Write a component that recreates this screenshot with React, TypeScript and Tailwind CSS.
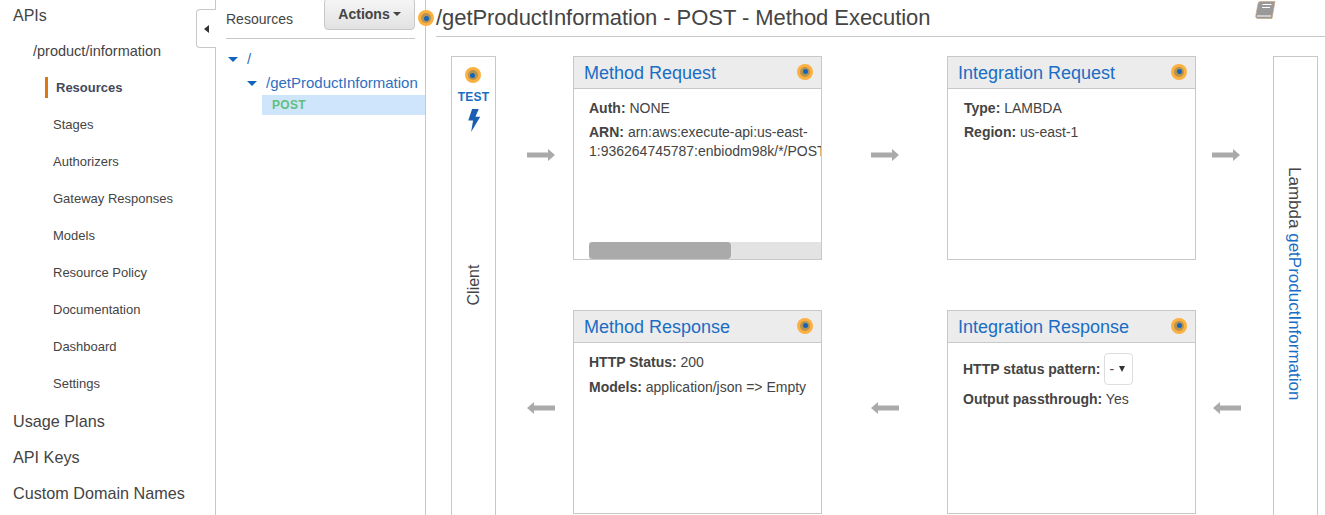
const navItems = ["Stages", "Authorizers", "Gateway Responses", "Models", "Resource Policy", "Documentation", "Dashboard", "Settings"];

function Dot() {
  return (
    <span className="flex h-4 w-4 shrink-0 items-center justify-center rounded-full bg-[#fbb040]">
      <span className="flex h-[10px] w-[10px] items-center justify-center rounded-full bg-[#b8934f]">
        <span className="h-[5px] w-[5px] rounded-full bg-[#1166bb]"></span>
      </span>
    </span>
  );
}

function Arrow({ left }: { left?: boolean }) {
  return (
    <svg width="28" height="14" viewBox="0 0 28 14" className={left ? "rotate-180" : ""}>
      <path d="M0 4.5H21V1L28 7L21 13V9.5H0Z" fill="#aaaaaa" />
    </svg>
  );
}

function ArrowCell({ left, className }: { left?: boolean; className?: string }) {
  return (
    <div className={`flex items-center justify-center ${className ?? ""}`}>
      <Arrow left={left} />
    </div>
  );
}

function Caret() {
  return <span className="h-0 w-0 border-x-[5px] border-t-[5px] border-x-transparent border-t-[#1166bb]"></span>;
}

function Card({ title, children }: { title: string; children?: React.ReactNode }) {
  return (
    <div className="flex h-[204px] w-[249px] flex-col overflow-hidden border border-[#c8c8c8] bg-white">
      <div className="flex h-[32px] shrink-0 items-center justify-between border-b border-[#c8c8c8] bg-[#ececec] pl-[10px] pr-[8px]">
        <span className="text-[18px] leading-none text-[#1a6dc4]">{title}</span>
        <span className="-mt-[2px]"><Dot /></span>
      </div>
      {children}
    </div>
  );
}

function Line({ label, value }: { label: string; value: string }) {
  return (
    <div className="h-[24px] whitespace-nowrap text-[14px] leading-[24px] text-[#444444]">
      <b>{label}</b> {value}
    </div>
  );
}

function BookIcon() {
  return (
    <svg width="21" height="19" viewBox="0 0 21 19" className="absolute right-[49px] top-[1px]">
      <path d="M5.5 0.5H20L17 17.5H3C1.2 17.5 0.4 16.3 0.8 14.5L3 2.8C3.3 1.4 4.2 0.5 5.5 0.5Z" fill="#999999" stroke="#c9a680" strokeWidth="0.7" />
      <path d="M7.5 3.5H16.5M7 6.5H15" stroke="#ffffff" strokeWidth="1.2" />
      <path d="M2 15H16" stroke="#ffffff" strokeWidth="1" />
    </svg>
  );
}

export default function App() {
  return (
    <div className="flex h-[515px] w-[1325px] overflow-hidden bg-white font-['Liberation_Sans',Arial,sans-serif] text-[#444444]">
      {/* SIDEBAR */}
      <aside className="relative w-[216px] shrink-0 border-r border-[#c8c8c8] pl-[13px]">
        <div className="mt-[5px] h-[21px] text-[16px] leading-[21px]">APIs</div>
        <div className="ml-[20px] mt-[15px] h-[21px] text-[14.5px] leading-[21px]">/product/information</div>
        <div className="ml-[32px] mt-[15px] flex h-[21px] items-center border-l-[3px] border-[#dd7711] pl-[8px] text-[13px] font-bold text-[#44495a]">
          Resources
        </div>
        <div className="ml-[40px] flex flex-col">
          {navItems.map((item) => (
            <div key={item} className="mt-[16px] h-[21px] text-[13px] leading-[21px]">{item}</div>
          ))}
        </div>
        <div className="mt-[17px] flex flex-col gap-[15px] text-[16.2px] leading-[21px]">
          <div className="h-[21px]">Usage Plans</div>
          <div className="h-[21px]">API Keys</div>
          <div className="h-[21px]">Custom Domain Names</div>
        </div>
        <div className="absolute -right-px top-[9px] flex h-[39px] w-[20px] items-center rounded-l-[4px] border border-r-0 border-[#c8c8c8] bg-white pl-[7px]">
          <span className="h-0 w-0 border-y-[4px] border-r-[5px] border-y-transparent border-r-[#333333]"></span>
        </div>
      </aside>

      {/* RESOURCES */}
      <section className="relative w-[210px] shrink-0 border-r border-[#c8c8c8]">
        <div className="ml-[10px] mr-[10px] flex h-[39px] items-start justify-between border-b border-[#c8c8c8]">
          <span className="mt-[9px] text-[14px] leading-[20px]">Resources</span>
          <button className="-mt-[2px] flex h-[32px] w-[91px] items-center justify-center gap-[3px] rounded-[4px] border border-[#c8c8c8] bg-gradient-to-b from-[#f6f6f6] to-[#e2e2e2] text-[14px] font-bold text-[#444444]">
            Actions
            <span className="h-0 w-0 border-x-[4px] border-t-[4px] border-x-transparent border-t-[#444444]"></span>
          </button>
        </div>
        <div className="ml-[12px] mt-[10px] flex h-[20px] items-center gap-[9px] text-[15px] text-[#2f6fc0]">
          <Caret /> /
        </div>
        <div className="ml-[31px] mt-[4px] flex h-[20px] items-center gap-[9px] whitespace-nowrap text-[15px] text-[#2f6fc0]">
          <Caret /> /getProductInformation
        </div>
        <div className="ml-[46px] mt-[2px] h-[20px] bg-[#cfe5fb] pl-[10px] text-[12px] font-bold leading-[20px] tracking-[0.3px] text-[#5fc07e]">
          POST
        </div>
        <span className="absolute -right-[9px] top-[10px]"><Dot /></span>
      </section>

      {/* METHOD EXECUTION */}
      <main className="min-w-0 flex-1 pl-[10px]">
        <div className="relative flex h-[37px] items-center border-b border-[#c8c8c8]">
          <h1 className="text-[22px] leading-none tracking-[-0.06px] text-[#444444]">/getProductInformation - POST - Method Execution</h1>
          <BookIcon />
        </div>
        <div className="ml-[15px] mt-[19px] grid grid-cols-[45px_77px_249px_125px_249px_77px_45px] grid-rows-[204px_50px_204px]">
          <div className="row-span-3 flex h-[470px] flex-col items-center border border-[#c8c8c8] pt-[10px]">
            <span className="-ml-[2px]"><Dot /></span>
            <div className="mt-[7px] text-[12px] font-bold leading-[14px] tracking-[0.2px] text-[#1a6dc4]">TEST</div>
            <svg width="14" height="23" viewBox="0 0 14 24" className="mt-[5px]">
              <path d="M5 0H12L8.5 8H13.5L4 24L6 12H1Z" fill="#1a5fb4" />
            </svg>
            <div className="flex flex-1 items-center justify-center">
              <span className="-mt-[88px] ml-[1px] -rotate-90 text-[16px]">Client</span>
            </div>
          </div>
          <ArrowCell className="ml-[12px] -mt-[6px]" />
          <Card title="Method Request">
            <div className="flex flex-1 flex-col overflow-hidden pl-[15px] pt-[7px]">
              <Line label="Auth:" value="NONE" />
              <div className="mt-[3px] whitespace-nowrap text-[14px] leading-[19px]">
                <b>ARN:</b> arn:aws:execute-api:us-east-
                <br />
                1:936264745787:enbiodm98k/*/POST
              </div>
              <div className="mt-auto h-[17px] bg-[#e3e3e3]">
                <div className="h-full w-[142px] rounded-[4px] bg-[#aaaaaa]"></div>
              </div>
            </div>
          </Card>
          <ArrowCell className="-mt-[6px]" />
          <Card title="Integration Request">
            <div className="pl-[16px] pt-[7px]">
              <Line label="Type:" value="LAMBDA" />
              <Line label="Region:" value="us-east-1" />
            </div>
          </Card>
          <ArrowCell className="-ml-[18px] -mt-[6px]" />
          <div className="row-span-3 flex h-[470px] items-center justify-center border border-[#c8c8c8]">
            <span className="-mt-[14px] ml-[-1px] rotate-90 whitespace-nowrap text-[17px]">
              Lambda <span className="text-[#1a6dc4]">getProductInformation</span>
            </span>
          </div>

          <div className="col-start-2 row-start-3"><ArrowCell left className="h-full ml-[12px] -mt-[4px]" /></div>
          <div className="col-start-3 row-start-3">
            <Card title="Method Response">
              <div className="pl-[15px] pt-[7px]">
                <Line label="HTTP Status:" value="200" />
                <div className="mt-[1px]"><Line label="Models:" value="application/json => Empty" /></div>
              </div>
            </Card>
          </div>
          <div className="col-start-4 row-start-3"><ArrowCell left className="h-full -mt-[4px]" /></div>
          <div className="col-start-5 row-start-3">
            <Card title="Integration Response">
              <div className="pl-[15px] pt-[10px]">
                <div className="flex items-center text-[14px] text-[#444444]">
                  <b>HTTP status pattern:</b>
                  <span className="ml-[4px] flex h-[32px] w-[29px] items-center gap-[5px] rounded-[4px] border border-[#dddddd] pl-[4px]">
                    -
                    <span className="h-0 w-0 border-x-[3px] border-t-[6px] border-x-transparent border-t-[#333333]"></span>
                  </span>
                </div>
                <div className="mt-[2px]"><Line label="Output passthrough:" value="Yes" /></div>
              </div>
            </Card>
          </div>
          <div className="col-start-6 row-start-3"><ArrowCell left className="h-full -ml-[16px] -mt-[4px]" /></div>
        </div>
      </main>
    </div>
  );
}
